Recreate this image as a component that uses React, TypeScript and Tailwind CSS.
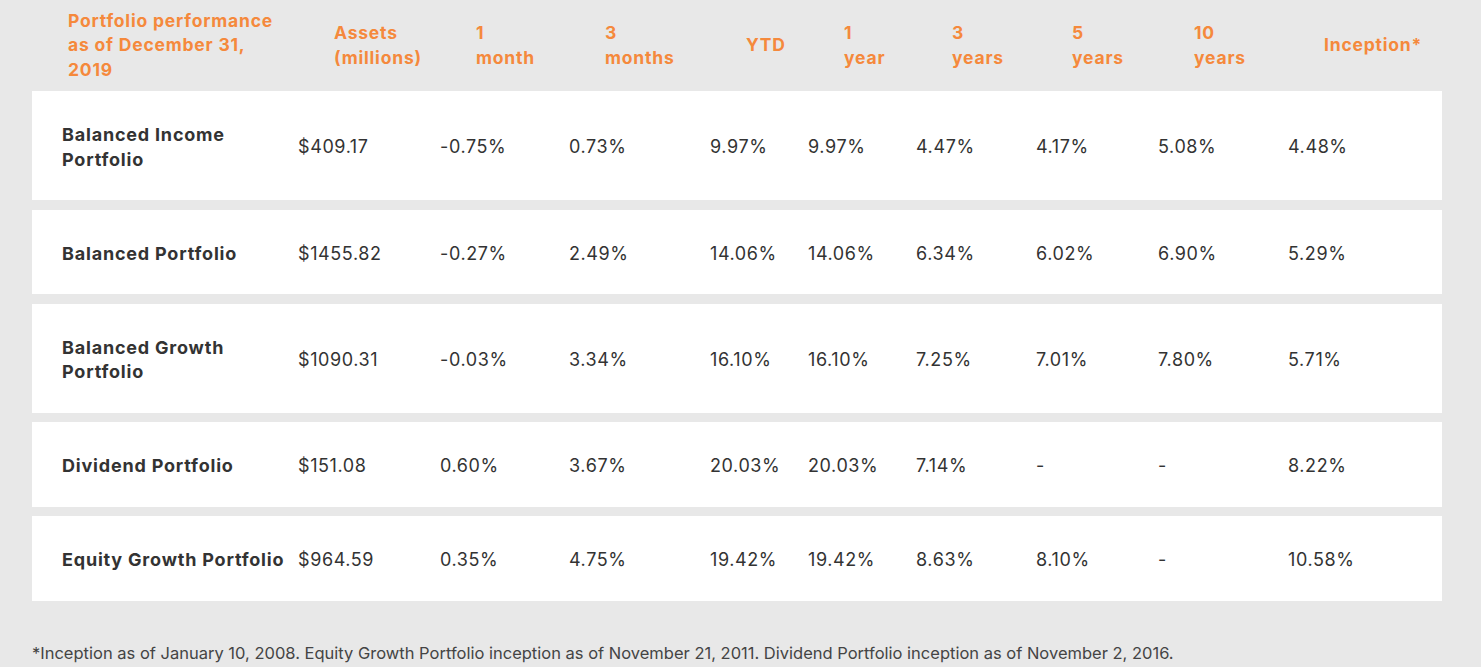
const rows = [
  { name: ['Balanced Income', 'Portfolio'], vals: ['$409.17', '-0.75%', '0.73%', '9.97%', '9.97%', '4.47%', '4.17%', '5.08%', '4.48%'] },
  { name: ['Balanced Portfolio'], vals: ['$1455.82', '-0.27%', '2.49%', '14.06%', '14.06%', '6.34%', '6.02%', '6.90%', '5.29%'] },
  { name: ['Balanced Growth', 'Portfolio'], vals: ['$1090.31', '-0.03%', '3.34%', '16.10%', '16.10%', '7.25%', '7.01%', '7.80%', '5.71%'] },
  { name: ['Dividend Portfolio'], vals: ['$151.08', '0.60%', '3.67%', '20.03%', '20.03%', '7.14%', '-', '-', '8.22%'] },
  { name: ['Equity Growth Portfolio'], vals: ['$964.59', '0.35%', '4.75%', '19.42%', '19.42%', '8.63%', '8.10%', '-', '10.58%'] },
];

const headers = [
  ['Assets', '(millions)'],
  ['1', 'month'],
  ['3', 'months'],
  ['YTD'],
  ['1', 'year'],
  ['3', 'years'],
  ['5', 'years'],
  ['10', 'years'],
  ['Inception*'],
];

const cols = 'grid grid-cols-[236px_142px_129px_141px_98px_108px_120px_122px_130px_1fr] px-[30px]';

export default function App() {
  return (
    <div className="min-h-screen w-full bg-[#e8e8e8] font-['Inter','Liberation_Sans',sans-serif] text-[#333333]">
      <div className="w-[1410px] ml-[32px]">
        <div className={`${cols} h-[91px] items-center text-[17.5px] font-bold tracking-[0.8px] leading-[24.5px] text-[#f5893c]`}>
          <div className="pl-[6px]">
            Portfolio performance
            <br />
            as of December 31,
            <br />
            2019
          </div>
          {headers.map((h, i) => (
            <div key={i} className="pl-[36px] whitespace-nowrap">
              {h.map((line, j) => (
                <div key={j}>{line}</div>
              ))}
            </div>
          ))}
        </div>

        <div className="flex flex-col gap-[9.5px]">
          {rows.map((r, i) => (
            <div key={i} className={`${cols} bg-white pt-[32px] pb-[28px] items-center text-[18px] tracking-[0.6px] leading-[24.5px]`}>
              <div className="font-bold tracking-[0.8px] whitespace-nowrap">
                {r.name.map((n, j) => (
                  <div key={j}>{n}</div>
                ))}
              </div>
              {r.vals.map((v, j) => (
                <div key={j}>{v}</div>
              ))}
            </div>
          ))}
        </div>

        <p className="mt-[41px] text-[16.5px] leading-[22px] text-[#444444] whitespace-nowrap">
          *Inception as of January 10, 2008. Equity Growth Portfolio inception as of November 21, 2011. Dividend Portfolio inception as of November 2, 2016.
        </p>
      </div>
    </div>
  );
}
